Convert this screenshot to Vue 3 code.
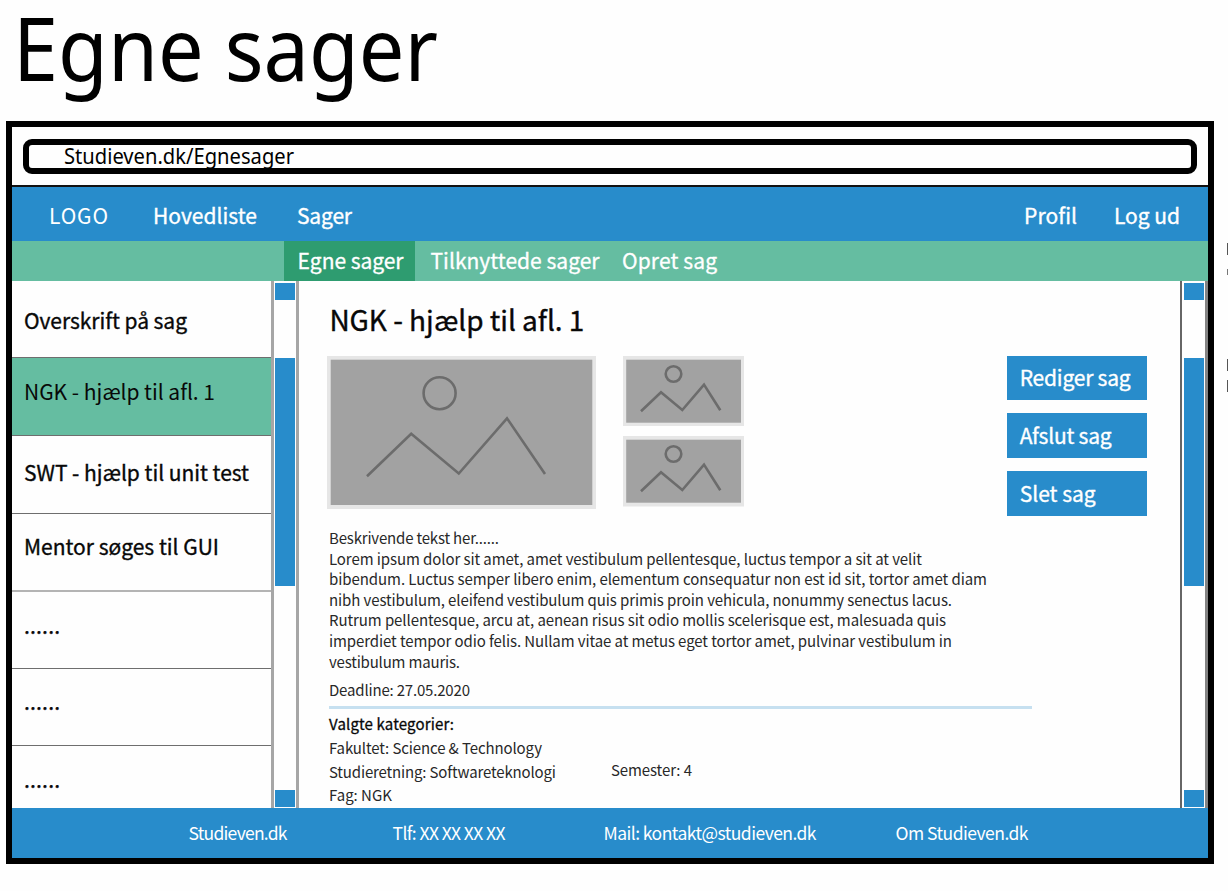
<script setup>
// Justifies a single line of text to a given width by adjusting its tracking.
const vFit = {
  mounted(el, { value, modifiers }) {
    const count = el.textContent.length
    const natural = el.getBoundingClientRect().width
    if (modifiers.scale) {
      el.style.transform = `scaleX(${value / natural})`
      return
    }
    el.style.letterSpacing = (value - natural) / (count - 1) + 'px'
    el.style.width = value + 'px'
  },
}

const cases = [
  { label: 'Overskrift på sag', width: 163 },
  { label: 'NGK - hjælp til afl. 1', width: 191 },
  { label: 'SWT - hjælp til unit test', width: 225 },
  { label: 'Mentor søges til GUI', width: 195 },
  { label: '......', width: 36 },
  { label: '......', width: 36 },
  { label: '......', width: 36 },
]
const activeCase = 1

const lines = [
  { text: 'Beskrivende tekst her......', width: 170 },
  { text: 'Lorem ipsum dolor sit amet, amet vestibulum pellentesque, luctus tempor a sit at velit', width: 593 },
  { text: 'bibendum. Luctus semper libero enim, elementum consequatur non est id sit, tortor amet diam', width: 658 },
  { text: 'nibh vestibulum, eleifend vestibulum quis primis proin vehicula, nonummy senectus lacus.', width: 623 },
  { text: 'Rutrum pellentesque, arcu at, aenean risus sit odio mollis scelerisque est, malesuada quis', width: 617 },
  { text: 'imperdiet tempor odio felis. Nullam vitae at metus eget tortor amet, pulvinar vestibulum in', width: 623 },
  { text: 'vestibulum mauris.', width: 131 },
]

const actions = [
  { label: 'Rediger sag', width: 111 },
  { label: 'Afslut sag', width: 92 },
  { label: 'Slet sag', width: 76 },
]
</script>

<template>
  <div class="page">
    <h1><span v-fit.scale="425" class="t wide">Egne sager</span></h1>

    <div class="window">
      <div class="chrome">
        <div class="url"><span v-fit.scale="230" class="t wide">Studieven.dk/Egnesager</span></div>
      </div>

      <nav class="nav">
        <span v-fit="59" class="t logo">LOGO</span>
        <span v-fit="104" class="t list">Hovedliste</span>
        <span v-fit="55" class="t">Sager</span>
        <span v-fit="53" class="t profile">Profil</span>
        <span v-fit="66" class="t">Log ud</span>
      </nav>

      <div class="subnav">
        <div class="tab"><span v-fit="106" class="t">Egne sager</span></div>
        <span v-fit="169" class="t linked">Tilknyttede sager</span>
        <span v-fit="95" class="t create">Opret sag</span>
      </div>

      <div class="body">
        <div class="cases">
          <div v-for="(c, i) in cases" :key="i" class="case" :class="['c' + i, { active: i === activeCase }]">
            <span v-fit="c.width" class="t">{{ c.label }}</span>
          </div>
        </div>
        <div class="scroll"><i class="arrow"></i><i class="thumb"></i><i class="arrow end"></i></div>

        <main class="detail">
          <h2><span v-fit="255" class="t">NGK - hjælp til afl. 1</span></h2>
          <div class="media">
            <svg class="big" width="269" height="153" viewBox="0 0 269 153">
              <rect width="269" height="153" fill="#e6e6e6" />
              <rect x="3.7" y="3.7" width="261.6" height="145.3" fill="#a2a2a2" />
              <g fill="none" stroke="#6c6c6c" stroke-width="2.6">
                <circle cx="112.6" cy="37.2" r="16" />
                <path d="M40 120.3 84.2 77.8 131.8 117.5 180 62.3 218 118" />
              </g>
            </svg>
            <div class="thumbs">
              <svg v-for="n in 2" :key="n" width="121" height="70.5" viewBox="0 0 121 70.5">
                <rect width="121" height="70.5" fill="#e6e6e6" />
                <rect x="3.2" y="3.7" width="114.8" height="63" fill="#a2a2a2" />
                <g fill="none" stroke="#6c6c6c" stroke-width="2.6">
                  <circle cx="50.5" cy="18" r="7.8" />
                  <path d="M18 55.3 38 36.3 59.3 54 81 28.6 97.3 54.3" />
                </g>
              </svg>
            </div>
            <div class="actions">
              <button v-for="a in actions" :key="a.label"><span v-fit="a.width" class="t">{{ a.label }}</span></button>
            </div>
          </div>

          <div class="copy">
            <div v-for="l in lines" :key="l.text" class="line"><span v-fit="l.width" class="t">{{ l.text }}</span></div>
          </div>
          <div class="deadline"><span v-fit="141" class="t">Deadline: 27.05.2020</span></div>
          <hr />
          <div class="category strong"><span v-fit="125" class="t">Valgte kategorier:</span></div>
          <div class="category"><span v-fit="213" class="t">Fakultet: Science &amp; Technology</span></div>
          <div class="category split">
            <span v-fit="227" class="t">Studieretning: Softwareteknologi</span>
            <span v-fit="81" class="t semester">Semester: 4</span>
          </div>
          <div class="category last"><span v-fit="63" class="t">Fag: NGK</span></div>
        </main>
        <div class="scroll right"><i class="arrow"></i><i class="thumb"></i><i class="arrow end"></i></div>
      </div>

      <footer class="footer">
        <span v-fit="99" class="t">Studieven.dk</span>
        <span v-fit="113" class="t phone">Tlf: XX XX XX XX</span>
        <span v-fit="213" class="t mail">Mail: kontakt@studieven.dk</span>
        <span v-fit="133" class="t about">Om Studieven.dk</span>
      </footer>
    </div>

    <div class="edge">
      <i class="stem"></i><i class="dot"></i><i class="stem second"></i><i class="stem third"></i>
    </div>
  </div>
</template>

<style>
body { background: #fff; overflow: hidden; }
</style>

<style scoped>
* { box-sizing: border-box; }
.page {
  position: relative;
  width: 1228px;
  height: 891px;
  overflow: hidden;
  background: #fefefe;
  color: #080808;
  font-family: "Noto Sans CJK SC", "Noto Sans", sans-serif;
}
.t { display: inline-block; flex: none; white-space: pre; }
.wide { transform-origin: 0 50%; }
h1, h2 { margin: 0; font-weight: 400; }
h1 {
  height: 121px;
  padding-left: 13px;
  font-family: "Noto Sans", sans-serif;
  font-size: 88px;
  line-height: 95px;
  color: #000;
}
.window {
  width: 1208px;
  height: 743px;
  margin-left: 6px;
  border: 6px solid #000;
  display: flex;
  flex-direction: column;
}
.chrome { height: 60px; padding: 12px 11px 0 11px; border-bottom: 2.6px solid #111; }
.url {
  height: 35px;
  border: 6px solid #000;
  border-radius: 9px;
  padding-left: 34.5px;
  font-family: "Noto Sans", sans-serif;
  font-size: 21px;
  line-height: 22px;
  color: #000;
}
.nav, .subnav, .footer { display: flex; flex: none; color: #fff; }
.nav {
  height: 54px;
  padding: 0 28px 0 37px;
  background: #288ccb;
  font-size: 21px;
  line-height: 56px;
  -webkit-text-stroke: 0.35px #fff;
}
.logo { margin-right: 45px; -webkit-text-stroke: 0; }
.list { margin-right: 40px; }
.profile { margin: 0 37px 0 auto; }
.subnav {
  height: 40px;
  padding-left: 272px;
  background: #65bda1;
  font-size: 21px;
  line-height: 39px;
  -webkit-text-stroke: 0.3px #fff;
}
.tab { width: 131px; padding-left: 13.5px; background: #2e9c70; }
.linked { margin-left: 15.5px; }
.create { margin-left: 22.5px; }
.body { display: flex; height: 527px; flex: none; overflow: hidden; }
.cases { width: 259px; }
.case {
  height: 78px;
  border-bottom: 1px solid #6e6e6e;
  padding: 17px 0 0 12px;
  font-size: 21px;
  line-height: 30px;
  -webkit-text-stroke: 0.35px #080808;
}
.case.active { background: #65bda1; -webkit-text-stroke: 0; }
.c0 { height: 77px; padding-top: 24px; }
.c1 { padding-top: 18px; }
.c2 { padding-top: 21px; }
.c3 { padding-top: 17px; border-bottom: 2px solid #b4b4b4; }
.c4 { height: 77px; padding-top: 18px; }
.c5 { height: 77px; }
.c6 { padding-top: 18px; border-bottom: 0; }
.scroll {
  display: flex;
  flex: none;
  flex-direction: column;
  width: 28px;
  padding: 2px 1px 1.5px 1px;
  border-left: 3px solid #a6a6a6;
  border-right: 3px solid #a6a6a6;
}
.arrow { flex: none; height: 16.5px; background: #288ccb; }
.thumb { flex: none; height: 228px; margin-top: 58px; background: #288ccb; }
.end { margin-top: auto; }
.scroll.right { border-left: 2px solid #666; border-right: 3px solid #838383; padding-left: 2px; }
.detail { width: 881px; flex: none; padding-left: 28.4px; }
h2 { height: 74.5px; padding: 20px 0 0 2px; font-size: 28px; line-height: 36px; -webkit-text-stroke: 0.35px #080808; }
h2 .t { display: block; width: max-content; }
.media { display: flex; height: 153px; }
.big { flex: none; }
.thumbs { display: flex; flex-direction: column; gap: 10px; margin-left: 26.5px; }
.thumbs svg { flex: none; }
.actions { display: flex; flex-direction: column; gap: 13.2px; margin-left: 262.8px; }
button {
  width: 140.5px;
  height: 44.8px;
  flex: none;
  padding: 0 0 0 13px;
  border: 0;
  text-align: left;
  background: #288ccb;
  color: #fff;
  font: 21px/43px "Noto Sans CJK SC", "Noto Sans", sans-serif;
  -webkit-text-stroke: 0.35px #fff;
}
button .t { display: block; width: max-content; }
.copy { padding: 19.5px 0 0 1.6px; font-size: 15px; color: #282828; }
.line { height: 20.6px; line-height: 20.6px; }
.deadline, .category { height: 24px; padding-left: 1.6px; font-size: 15px; line-height: 24px; color: #282828; }
.deadline { margin-top: 6px; }
hr { width: 703px; height: 3px; margin: 4px 0 3px 1.6px; border: 0; background: #c6e0f0; }
.strong { color: #080808; -webkit-text-stroke: 0.3px #080808; }
.split { display: flex; }
.semester { margin-left: 55px; margin-top: -2px; }
.last { margin-top: -1px; }
.footer {
  height: 50px;
  padding-left: 176.5px;
  background: #288ccb;
  font-size: 17.5px;
  line-height: 50px;
}
.phone { margin-left: 105px; }
.mail { margin-left: 98px; }
.about { margin-left: 79px; }
.edge { position: absolute; top: 243px; right: 0; width: 2px; height: 150px; }
.edge i { position: absolute; right: 0; width: 1px; background: #555; }
.stem { top: 0; height: 12px; }
.edge .dot { top: 26px; height: 6px; background: #777; }
.edge .second { top: 116px; }
.edge .third { top: 137px; }
</style>
